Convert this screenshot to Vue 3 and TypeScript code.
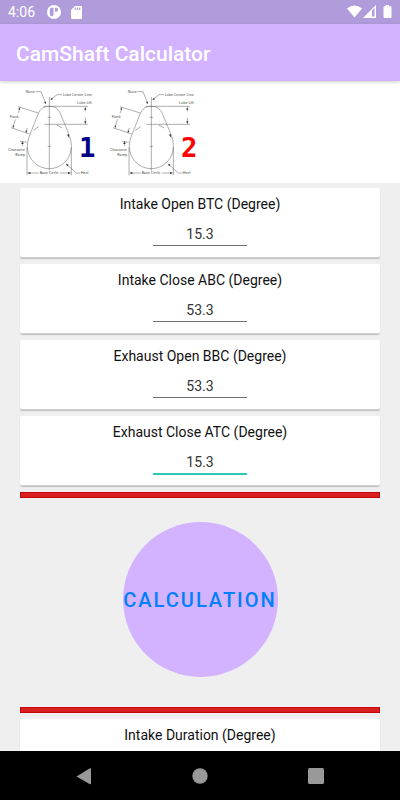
<script setup lang="ts">
import { ref } from 'vue'

interface Field {
  id: string
  label: string
  value: string
}

const fields = ref<Field[]>([
  { id: 'intake-open', label: 'Intake Open BTC (Degree)', value: '15.3' },
  { id: 'intake-close', label: 'Intake Close ABC (Degree)', value: '53.3' },
  { id: 'exhaust-open', label: 'Exhaust Open BBC (Degree)', value: '53.3' },
  { id: 'exhaust-close', label: 'Exhaust Close ATC (Degree)', value: '15.3' },
])
const active = ref('exhaust-close')
const intakeDuration = ref<number | null>(null)

const cams = [
  { number: 1, tone: 'navy' },
  { number: 2, tone: 'red' },
]

function calculate() {
  intakeDuration.value = Number(fields.value[0].value) + Number(fields.value[1].value) + 180
}
</script>

<template>
  <div class="screen">
    <div class="status">
      <span class="clock">4:06</span>
      <svg class="status-icon notice" viewBox="0 0 14 14" width="14" height="14">
        <circle cx="7" cy="7" r="7" fill="#fff" />
        <path d="M2.800 4.800Q2.800 2.800 4.800 2.800H6.600V9Q6.600 11.300 4.700 11.300Q2.800 11.300 2.800 9Z M8 2.800H9.200A2 2 0 0 1 9.200 6.800H8Z" fill="#b09cdb" />
      </svg>
      <svg class="status-icon" viewBox="0 0 11 13" width="11" height="13">
        <path d="M4 0H10Q11 0 11 1V12Q11 13 10 13H1Q0 13 0 12V4Z" fill="#fff" />
        <path d="M4.300 1.500V4M6.500 1.500V4M8.700 1.500V4" stroke="#b09cdb" stroke-width="1.200" />
      </svg>
      <svg class="status-icon system" viewBox="0 0 45 14" width="45" height="14">
        <path d="M0 3.500Q7.500 -2.500 15 3.500L7.500 12.500Z" fill="#fff" />
        <path d="M16 13L29 0V13Z" fill="#fff" />
        <path d="M25 5.500L27.500 3V11.500H25Z" fill="#b09cdb" />
        <path d="M38.500 0H42V1.300H43.500Q44.500 1.300 44.500 2.300V12Q44.500 13 43.500 13H37.500Q36.500 13 36.500 12V2.300Q36.500 1.300 37.500 1.300H38.500Z" fill="#fff" />
      </svg>
    </div>

    <header class="app-bar">
      <h1>CamShaft Calculator</h1>
    </header>

    <div class="diagrams">
      <svg v-for="cam in cams" :key="cam.number" class="cam" viewBox="0 0 306 303" role="img" :aria-label="`Cam lobe ${cam.number}`">
        <g fill="none" stroke="#666" stroke-width="1.600">
          <path d="M82 194C82 178 86 168 91 155L114 97C121 79 132 73 148 73S175 79 182 97L206 155C211 168 214 178 214 194A66 66 0 0 1 82 194Z" />
          <path d="M148 45V266" />
          <path d="M143 106H153M143 193H153M130 73H264M133 127H264M256 79V88M256 107V123" />
          <path d="M106 29H123L137 63M186 38H171L153 52M54 74L115 93M33 137L89 156M60 77L54 94M46 112L39 136M82 138L78 151" />
          <path d="M60 178L80 181M68 179V192M81 196V280M214 196V280M85 273H116M180 273H211M200 247L229 273H241" />
          <path d="M100 145L116 134M170 129L187 138" />
        </g>
        <path d="M137 67L132 60L138 59ZM151 54L156 47L159 52ZM59 76L60 84L55 82ZM39 138L38 130L43 132ZM78 153L77 145L82 147ZM256 74L253 83H259ZM256 127L253 118H259ZM82 273L91 270V276ZM213 273L204 270V276ZM198 245L206 248L201 253ZM208 168L201 158L206 156ZM67 178L64 186H71Z" fill="#333" />
        <g class="notes">
          <text x="77" y="33">Nose</text>
          <text x="188" y="41">Lobe Center Line</text>
          <text x="231" y="65">Lobe Lift</text>
          <text x="29" y="109">Flank</text>
          <text x="24" y="206">Clearance</text>
          <text x="46" y="221">Ramp</text>
          <text x="119" y="277">Base Circle</text>
          <text x="242" y="277">Heel</text>
        </g>
        <text class="number" :class="cam.tone" x="262" y="224">{{ cam.number }}</text>
      </svg>
    </div>

    <main class="content">
      <div v-for="field in fields" :key="field.id" class="card">
        <label :for="field.id">{{ field.label }}</label>
        <input
          :id="field.id"
          v-model="field.value"
          type="text"
          inputmode="decimal"
          :class="{ active: active === field.id }"
          @focus="active = field.id"
        />
      </div>
      <div class="divider"></div>
      <button class="calculate" type="button" @click="calculate">CALCULATION</button>
      <div class="divider"></div>
      <div class="card">
        <span class="result-label">Intake Duration (Degree)</span>
        <output for="intake-open intake-close">{{ intakeDuration ?? '' }}</output>
      </div>
    </main>

    <nav class="system-nav">
      <button type="button" aria-label="Back">
        <svg viewBox="0 0 18 18" width="18" height="18"><path d="M1.500 9.500L14.500 1.500Q16 .8 16 2V16Q16 17.700 14.500 17Z" fill="#999" /></svg>
      </button>
      <button type="button" aria-label="Home">
        <svg viewBox="0 0 18 18" width="18" height="18"><circle cx="9" cy="9" r="7.700" fill="#999" /></svg>
      </button>
      <button type="button" aria-label="Recent apps">
        <svg viewBox="0 0 18 18" width="18" height="18"><rect x="1" y="1" width="16" height="16" rx="1.500" fill="#999" /></svg>
      </button>
    </nav>
  </div>
</template>

<style>
body {
  background: #efefef;
}
</style>

<style scoped>
.screen {
  display: flex;
  flex-direction: column;
  height: 100vh;
  overflow: hidden;
  background: #efefef;
  color: #111;
  font-family: Roboto, sans-serif;
}

.screen * {
  box-sizing: border-box;
}

.status {
  display: flex;
  flex: none;
  align-items: center;
  height: 24px;
  padding: 0 8px;
  background: #b09cdb;
  color: #fff;
}

.clock {
  font-size: 14px;
  line-height: 24px;
}

.status-icon {
  flex: none;
  margin-right: 10px;
}

.notice {
  margin-left: 12px;
}

.system {
  margin: 0 0 0 auto;
}

.app-bar {
  z-index: 1;
  display: flex;
  flex: none;
  align-items: center;
  height: 57px;
  padding: 2px 16px 0;
  background: #d3b3ff;
  box-shadow: 0 1px 3px rgba(0, 0, 0, 0.2);
}

h1 {
  margin: 0;
  color: #fff;
  font-size: 21px;
  font-weight: 500;
  line-height: 24px;
}

.diagrams {
  display: flex;
  flex: none;
  height: 102px;
  background: #fff;
}

.cam {
  width: 102px;
  height: 101px;
  margin-top: 1px;
}

.notes {
  fill: #444;
  font-family: "Noto Sans", sans-serif;
  font-size: 11px;
}

.number {
  font-family: "DejaVu Sans Mono", monospace;
  font-size: 82px;
  font-weight: 700;
  text-anchor: middle;
}

.navy {
  fill: #000080;
}

.red {
  fill: #f00;
}

.content {
  display: flex;
  flex: 1;
  flex-direction: column;
  gap: 6px;
  min-height: 0;
  padding: 5px 20px;
  overflow-y: auto;
  scrollbar-width: none;
}

.card {
  display: flex;
  flex: none;
  flex-direction: column;
  align-items: center;
  height: 70px;
  padding-top: 6px;
  border-bottom: 1px solid #d0d0d0;
  border-radius: 2px;
  background: #fff;
  box-shadow: 0 1px 1px rgba(0, 0, 0, 0.2);
}

label,
.result-label {
  font-size: 14px;
  line-height: 20px;
}

input {
  width: 94px;
  height: 32px;
  padding: 8px 0 0;
  border: 0;
  border-bottom: 1px solid #707070;
  border-radius: 0;
  outline: 0;
  background: transparent;
  color: #333;
  font: 14px/20px Roboto, sans-serif;
  text-align: center;
}

input.active {
  height: 33px;
  border-bottom: 2px solid #2ec9b5;
}

.divider {
  flex: none;
  height: 6px;
  border: 1px solid #c80808;
  background: #d92020;
}

.calculate {
  flex: none;
  align-self: center;
  width: 155px;
  height: 155px;
  margin: 18px 0 24px;
  padding: 0;
  border: 0;
  border-radius: 50%;
  background: #d3b3ff;
  color: #007fff;
  font: 500 20px/24px Roboto, sans-serif;
  letter-spacing: 2px;
  white-space: nowrap;
}

.system-nav {
  display: flex;
  flex: none;
  align-items: center;
  justify-content: space-evenly;
  height: 49px;
  background: #000;
}

.system-nav button {
  display: grid;
  place-items: center;
  width: 48px;
  height: 48px;
  margin: 0 8px;
  padding: 0;
  border: 0;
  background: transparent;
}
</style>
